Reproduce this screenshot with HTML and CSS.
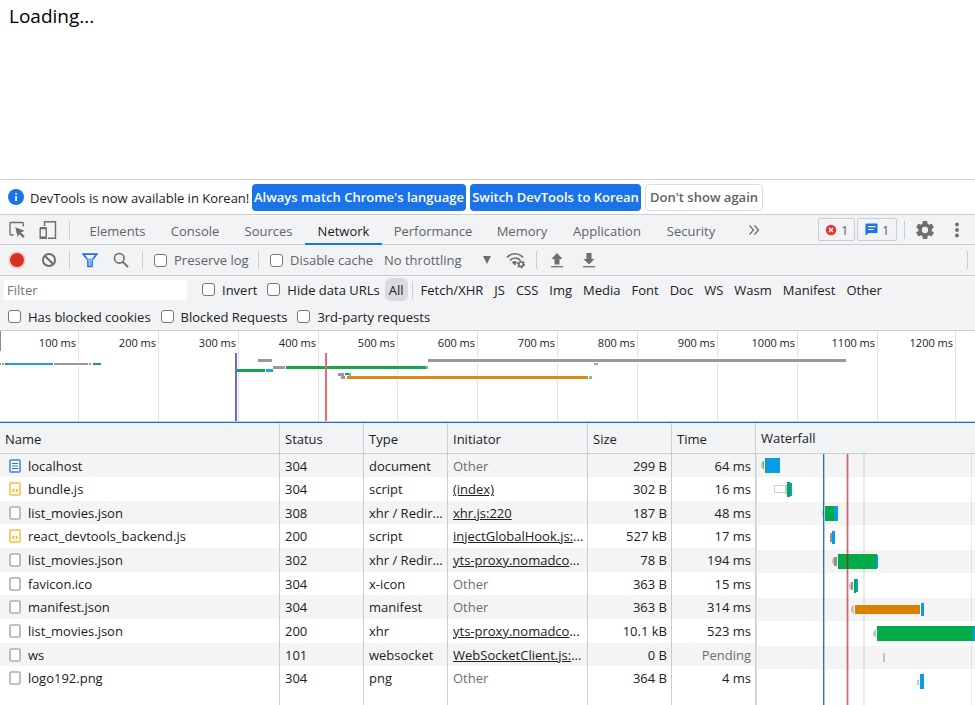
FILE: index.html
```
<!DOCTYPE html>
<html lang="en">
<head>
<meta charset="utf-8">
<title>Loading</title>
<link rel="stylesheet" href="styles.css">
</head>
<body>
<main class="page">Loading...</main>
<section class="devtools">
  <div class="infobar">
    <svg class="info-icon" width="16" height="16" viewBox="0 0 16 16"><circle cx="8" cy="8" r="8" fill="#1a73e8"/><path d="M7.2 4h1.7v1.6H7.2zM7.2 6.9h1.7v5.2H7.2z" fill="#fff"/></svg>
    <span class="info-text">DevTools is now available in Korean!</span>
    <button class="btn primary match">Always match Chrome's language</button>
    <button class="btn primary switch">Switch DevTools to Korean</button>
    <button class="btn dismiss">Don't show again</button>
  </div>

  <nav class="tabs">
    <button class="icon inspect" aria-label="Inspect"><svg width="18" height="18" viewBox="0 0 18 18"><path d="M15.300 5.500V2.500a1 1 0 0 0-1-1H3a1 1 0 0 0-1 1V13a1 1 0 0 0 1 1h2.500" fill="none" stroke="#6e6e6e" stroke-width="1.300"/><path d="M7.200 6.200l9.300 3.500-3.600 1.700 3.800 3.900-1.600 1.600-3.800-3.900-1.600 3z" fill="#6e6e6e"/></svg></button>
    <button class="icon device" aria-label="Device toolbar"><svg width="18" height="20" viewBox="0 0 18 20"><path d="M5.500 6V1.700h11v16.600H9M1.200 8.500h6v9.800h-6z" fill="none" stroke="#6e6e6e" stroke-width="1.400"/><path d="M1 8h6.500M1 17.500h6.500" stroke="#6e6e6e" stroke-width="2"/></svg></button>
    <span class="sep"></span>
    <div class="tablist" role="tablist">
      <button class="tab" role="tab">Elements</button>
      <button class="tab" role="tab">Console</button>
      <button class="tab" role="tab">Sources</button>
      <button class="tab active" role="tab" aria-selected="true">Network</button>
      <button class="tab" role="tab">Performance</button>
      <button class="tab" role="tab">Memory</button>
      <button class="tab" role="tab">Application</button>
      <button class="tab" role="tab">Security</button>
    </div>
    <button class="icon more" aria-label="More tabs"><svg width="12" height="12" viewBox="0 0 12 12"><path d="M1.500 1.500L5.500 6l-4 4.500M6.500 1.500l4 4.500-4 4.500" fill="none" stroke="#6e6e6e" stroke-width="1.300"/></svg></button>
    <button class="counter errors"><svg width="12" height="12" viewBox="0 0 12 12"><circle cx="6" cy="6" r="5.300" fill="#e8343f"/><path d="M4 4l4 4M8 4l-4 4" stroke="#fff" stroke-width="1.300"/></svg>1</button>
    <button class="counter issues"><svg width="13" height="13" viewBox="0 0 13 13"><path d="M1.500.500h10a1 1 0 0 1 1 1v7.500a1 1 0 0 1-1 1H3.500L.500 12.800V1.500a1 1 0 0 1 1-1z" fill="#1a73e8"/><path d="M3 3.700h7.500M3 6.500h5.500" stroke="#fff" stroke-width="1.200"/></svg>1</button>
    <span class="sep"></span>
    <button class="icon gear" aria-label="Settings"><svg width="18" height="18" viewBox="2 2 20 20"><path fill="#6e6e6e" d="M19.430 12.980c.04-.32.07-.64.07-.98s-.03-.66-.07-.98l2.110-1.650c.19-.15.24-.42.12-.64l-2-3.460c-.12-.22-.39-.3-.61-.22l-2.490 1c-.52-.4-1.080-.73-1.690-.98l-.38-2.650C14.460 2.180 14.250 2 14 2h-4c-.25 0-.46.18-.49.42l-.38 2.650c-.61.25-1.170.59-1.690.98l-2.490-1c-.23-.09-.49 0-.61.22l-2 3.460c-.13.22-.07.49.12.64l2.110 1.650c-.04.32-.07.65-.07.98s.03.66.07.98l-2.110 1.650c-.19.15-.24.42-.12.64l2 3.460c.12.22.39.3.61.22l2.490-1c.52.4 1.080.73 1.690.98l.38 2.650c.03.24.24.42.49.42h4c.25 0 .46-.18.49-.42l.38-2.650c.61-.25 1.170-.59 1.690-.98l2.490 1c.23.09.49 0 .61-.22l2-3.460c.12-.22.07-.49-.12-.64zM12 15.500a3.500 3.500 0 1 1 0-7 3.500 3.500 0 0 1 0 7z"/></svg></button>
    <button class="icon kebab" aria-label="Menu"><svg width="4" height="16" viewBox="0 0 4 16"><g fill="#6e6e6e"><circle cx="2" cy="2.500" r="1.900"/><circle cx="2" cy="8" r="1.900"/><circle cx="2" cy="13.500" r="1.900"/></g></svg></button>
  </nav>

  <div class="toolbar">
    <button class="icon record" aria-label="Record"><svg width="18" height="18" viewBox="0 0 18 18"><circle cx="9" cy="9" r="8.700" fill="#f6c9c6"/><circle cx="9" cy="9" r="7" fill="#d93025"/></svg></button>
    <button class="icon clear" aria-label="Clear"><svg width="16" height="16" viewBox="0 0 16 16"><circle cx="8" cy="8" r="6.100" fill="none" stroke="#6e6e6e" stroke-width="2"/><path d="M3.700 3.700l8.600 8.600" stroke="#6e6e6e" stroke-width="2"/></svg></button>
    <span class="sep"></span>
    <button class="icon funnel" aria-label="Filter"><svg width="16" height="15" viewBox="0 0 16 15"><path d="M1.300 1.200h13.400L10 7v6.500H6V7z" fill="#fff" stroke="#1a73e8" stroke-width="1.700"/><path d="M4.500 5.300h7L9.500 8v5h-3V8z" fill="#8ab4f0"/></svg></button>
    <button class="icon search" aria-label="Search"><svg width="16" height="16" viewBox="0 0 16 16"><circle cx="6.300" cy="6.300" r="4.800" fill="none" stroke="#6e6e6e" stroke-width="1.600"/><path d="M9.800 9.800l5.200 5.200" stroke="#6e6e6e" stroke-width="1.900"/></svg></button>
    <span class="sep"></span>
    <label class="check preserve"><input type="checkbox">Preserve log</label>
    <span class="sep"></span>
    <label class="check cache"><input type="checkbox">Disable cache</label>
    <div class="throttle"><select aria-label="Throttling"><option>No throttling</option></select><svg width="8" height="8" viewBox="0 0 8 8"><path d="M0 0h8L4 8z" fill="#6e6e6e"/></svg></div>
    <button class="icon wifi" aria-label="Network conditions"><svg width="20" height="17" viewBox="0 0 20 17"><g fill="none" stroke="#6e6e6e" stroke-width="1.700"><path d="M1 5.500C5.500.500 12.500.500 17 5.500"/><path d="M4 8.300c3-3 7-3 10-.3"/></g><path d="M5.800 10.200c1.800-1.500 3.600-1.500 4.900-.5L10 12.500 9 13.500z" fill="#6e6e6e"/><circle cx="15" cy="12.300" r="2.300" fill="none" stroke="#6e6e6e" stroke-width="1.700"/><circle cx="15" cy="12.300" r="3.500" fill="none" stroke="#6e6e6e" stroke-width="1.200" stroke-dasharray="1.830 1.830"/></svg></button>
    <span class="sep"></span>
    <button class="icon upload" aria-label="Import"><svg width="14" height="15" viewBox="0 0 14 15"><path d="M7 0l5.500 6H9.500v5.500h-5V6h-3z" fill="#6e6e6e"/><path d="M1 13.700h12" stroke="#6e6e6e" stroke-width="1.300"/></svg></button>
    <button class="icon download" aria-label="Export"><svg width="14" height="15" viewBox="0 0 14 15"><path d="M7 11.500L1.500 6h3V0h5v6h3z" fill="#6e6e6e"/><path d="M1 13.700h12" stroke="#6e6e6e" stroke-width="1.300"/></svg></button>
    <span class="sep end"></span>
  </div>

  <div class="filters">
    <div class="filter-row">
      <input class="filter-box" type="text" placeholder="Filter" aria-label="Filter">
      <label class="check invert"><input type="checkbox">Invert</label>
      <label class="check hide"><input type="checkbox">Hide data URLs</label>
      <div class="types">
        <button class="type on">All</button>
        <span class="sep"></span>
        <button class="type">Fetch/XHR</button>
        <button class="type">JS</button>
        <button class="type">CSS</button>
        <button class="type">Img</button>
        <button class="type">Media</button>
        <button class="type">Font</button>
        <button class="type">Doc</button>
        <button class="type">WS</button>
        <button class="type">Wasm</button>
        <button class="type">Manifest</button>
        <button class="type">Other</button>
      </div>
    </div>
    <div class="filter-row second">
      <label class="check"><input type="checkbox">Has blocked cookies</label>
      <label class="check"><input type="checkbox">Blocked Requests</label>
      <label class="check"><input type="checkbox">3rd-party requests</label>
    </div>
  </div>

  <div class="overview">
    <span>100 ms</span><span>200 ms</span><span>300 ms</span><span>400 ms</span><span>500 ms</span><span>600 ms</span><span>700 ms</span><span>800 ms</span><span>900 ms</span><span>1000 ms</span><span>1100 ms</span><span>1200 ms</span>
    <svg class="bars" viewBox="0 0 975 90" preserveAspectRatio="none">
      <path d="M0 0h1v20H0z" fill="#8c8c8c"/>
      <g fill="#fff"><path d="M0 31h102v5H0zM258 27h14v5h-14zM427 27h420v5H427zM273 34h156v5H273zM235 37h38v5h-38zM337 41h14v5h-14zM340 44h253v5H340z"/></g>
      <g fill="#999"><path d="M0 32h1v2H0zM2 32h2v2H2zM54 32h34v2H54zM89 32h2v2h-2zM258 28h14v3h-14zM428 28h418v3H428zM273 35h12v3h-12zM338 42h6v3h-6zM341 45h4v3h-4z"/></g>
      <g fill="#14a64c"><path d="M5 32h3v2H5zM93 32h8v2h-8zM286 35h140v3H286zM236 38h29v3h-29zM345 42h4v2h-4z"/></g>
      <g fill="#1f9fe6"><path d="M8 32h45v2H8zM266 38h7v3h-7z"/></g>
      <g fill="#6bc5b9"><path d="M426 35h2v3h-2zM349 42h2v3h-2zM589 45h3v3h-3zM594 32h4v2h-4z"/></g>
      <path d="M347 45h241v3H347z" fill="#dd8a12"/>
      <path d="M235 22h2v68h-2z" fill="#6a6ac8"/>
      <path d="M325 22h2v68h-2z" fill="#dd7070"/>
    </svg>
  </div>

  <div class="requests">
    <table>
      <colgroup><col class="c-name"><col class="c-small"><col class="c-small"><col class="c-init"><col class="c-small"><col class="c-small"></colgroup>
      <thead><tr><th>Name</th><th>Status</th><th>Type</th><th>Initiator</th><th>Size</th><th>Time</th></tr></thead>
      <tbody>
        <tr><td><svg class="file" viewBox="0 0 12 14"><rect x="1" y="1" width="10" height="12" rx="1" fill="#fff" stroke="#669df6" stroke-width="2"/><path d="M3 4.500h6M3 7h6M3 9.500h6" stroke="#1a73e8"/></svg>localhost</td><td>304</td><td>document</td><td class="dim">Other</td><td>299 B</td><td>64 ms</td></tr>
        <tr><td><svg class="file" viewBox="0 0 12 14"><rect x="1" y="1" width="10" height="12" rx="1" fill="#fff" stroke="#f8cf66" stroke-width="2"/><path d="M5.200 6.800L3.700 8.500l1.500 1.700M6.800 6.800l1.500 1.700-1.500 1.700" fill="none" stroke="#eeb010" stroke-width="1.200"/></svg>bundle.js</td><td>304</td><td>script</td><td><a href="#">(index)</a></td><td>302 B</td><td>16 ms</td></tr>
        <tr><td><svg class="file" viewBox="0 0 12 14"><rect x="1" y="1" width="10" height="12" rx="1" fill="#fff" stroke="#abb0b5" stroke-width="1.600"/></svg>list_movies.json</td><td>308</td><td>xhr / Redir...</td><td><a href="#">xhr.js:220</a></td><td>187 B</td><td>48 ms</td></tr>
        <tr><td><svg class="file" viewBox="0 0 12 14"><rect x="1" y="1" width="10" height="12" rx="1" fill="#fff" stroke="#f8cf66" stroke-width="2"/><path d="M5.200 6.800L3.700 8.500l1.500 1.700M6.800 6.800l1.500 1.700-1.500 1.700" fill="none" stroke="#eeb010" stroke-width="1.200"/></svg>react_devtools_backend.js</td><td>200</td><td>script</td><td><a href="#">injectGlobalHook.js:</a>...</td><td>527 kB</td><td>17 ms</td></tr>
        <tr><td><svg class="file" viewBox="0 0 12 14"><rect x="1" y="1" width="10" height="12" rx="1" fill="#fff" stroke="#abb0b5" stroke-width="1.600"/></svg>list_movies.json</td><td>302</td><td>xhr / Redir...</td><td><a href="#">yts-proxy.nomadco</a>...</td><td>78 B</td><td>194 ms</td></tr>
        <tr><td><svg class="file" viewBox="0 0 12 14"><rect x="1" y="1" width="10" height="12" rx="1" fill="#fff" stroke="#abb0b5" stroke-width="1.600"/></svg>favicon.ico</td><td>304</td><td>x-icon</td><td class="dim">Other</td><td>363 B</td><td>15 ms</td></tr>
        <tr><td><svg class="file" viewBox="0 0 12 14"><rect x="1" y="1" width="10" height="12" rx="1" fill="#fff" stroke="#abb0b5" stroke-width="1.600"/></svg>manifest.json</td><td>304</td><td>manifest</td><td class="dim">Other</td><td>363 B</td><td>314 ms</td></tr>
        <tr><td><svg class="file" viewBox="0 0 12 14"><rect x="1" y="1" width="10" height="12" rx="1" fill="#fff" stroke="#abb0b5" stroke-width="1.600"/></svg>list_movies.json</td><td>200</td><td>xhr</td><td><a href="#">yts-proxy.nomadco</a>...</td><td>10.1 kB</td><td>523 ms</td></tr>
        <tr><td><svg class="file" viewBox="0 0 12 14"><rect x="1" y="1" width="10" height="12" rx="1" fill="#fff" stroke="#abb0b5" stroke-width="1.600"/></svg>ws</td><td>101</td><td>websocket</td><td><a href="#">WebSocketClient.js:</a>...</td><td>0 B</td><td class="dim">Pending</td></tr>
        <tr><td><svg class="file" viewBox="0 0 12 14"><rect x="1" y="1" width="10" height="12" rx="1" fill="#fff" stroke="#abb0b5" stroke-width="1.600"/></svg>logo192.png</td><td>304</td><td>png</td><td class="dim">Other</td><td>364 B</td><td>4 ms</td></tr>
        <tr class="filler"><td></td><td></td><td></td><td></td><td></td><td></td></tr>
      </tbody>
    </table>
    <div class="waterfall">
      <div class="waterfall-head">Waterfall</div>
      <svg viewBox="0 0 219 251" preserveAspectRatio="none">
        <path d="M0 0h219v23H0zM0 48h219v23H0zM0 96h219v23H0zM0 144h219v23H0zM0 192h219v23H0z" fill="#f4f4f4"/>
        <path d="M107 0h2v251h-2zM215 0h1v251h-1z" fill="#000" fill-opacity=".08"/>
        <path d="M0 0h1v251H0z" fill="#e0e0e0"/>
        <g fill="#c4c4c4"><path d="M5 9l2-2v8l-2-2zM29 31h2v9h-2zM66 56h2v6h-2zM76 105l2-2v8l-2-2zM93 130l2-2v8l-2-2zM95 153l3-2v9l-3-2zM117 178l3-3v9l-3-3zM127 199h2v9h-2zM161 226h2v5h-2z"/></g>
        <g fill="#929292"><path d="M7 7h1v8H7zM74 79h3v9h-3zM78 103h3v9h-3zM95 128h2v8h-2z"/></g>
        <path d="M18.500 31.500h11v7h-11z" fill="#fff" stroke="#ccc"/>
        <g fill="#00ab48"><path d="M9 4h1v15H9zM31 28h3v15h-3zM68 52h11v15H68zM82 100h39v15H82zM98 125h2v14h-2zM121 172h96v15h-96z"/></g>
        <g fill="#079ce4"><path d="M10 4h14v15H10zM34 29h2v13h-2zM78 52h4v15h-4zM76 77h3v13h-3zM120 101h2v13h-2zM100 125h2v13h-2zM165 149h3v13h-3zM217 172h2v15h-2zM164 220h4v15h-4z"/></g>
        <path d="M99 151h65v9H99z" fill="#d98200"/>
        <path d="M67 0h1v251h-1z" fill="#2a6fc9"/><path d="M68 0h1v251h-1z" fill="#a9c6ee"/>
        <path d="M90 0h1v251h-1zM92 0h1v251h-1z" fill="#c01818" fill-opacity=".25"/><path d="M91 0h1v251h-1z" fill="#a00c0c" fill-opacity=".6"/>
      </svg>
    </div>
  </div>
</section>
</body>
</html>
```
FILE: styles.css
```
* { box-sizing: border-box; }
body {
  margin: 0;
  background: #fff;
  color: #202124;
  font: 13px/18px "Open Sans", "Noto Sans", sans-serif;
}
button, input, select { font: inherit; color: inherit; margin: 0; }
button { border: 0; background: none; padding: 0; white-space: nowrap; }
svg { display: block; flex: none; }

.page {
  height: 179px;
  padding: 3px 9px;
  color: #000;
  font-size: 19px;
  line-height: 26px;
}
.devtools { border-top: 1px solid #cacdd1; }

.infobar {
  display: flex;
  align-items: center;
  height: 35px;
  padding-left: 8px;
  border-bottom: 1px solid #cacdd1;
}
.info-text { width: 222px; margin: 2px 0 0 6px; white-space: nowrap; }
.btn { height: 27px; border-radius: 4px; font-weight: 600; }
.primary { background: #1a73e8; color: #fff; margin-right: 4px; }
.match { width: 214px; }
.switch { width: 171px; }
.dismiss { width: 118px; border: 1px solid #dadce0; color: #5f6368; }

.tabs, .toolbar {
  display: flex;
  align-items: center;
  background: #f1f3f4;
  border-bottom: 1px solid #cacdd1;
  color: #5f6368;
}
.tabs { height: 30px; padding: 0 16px 0 8px; }
.toolbar { height: 31px; padding: 0 7px 0 8px; }
.sep { flex: none; width: 1px; height: 18px; background: #cacdd1; }
.device { margin: 0 12px 0 13px; }
.tablist {
  display: grid;
  grid-template-columns: 81px 74px 73px 77px 102px 76px 94px 74px;
  align-self: stretch;
  margin-left: 7px;
}
.tab { height: 30px; padding: 4px 0 0; border-bottom: 2px solid transparent; }
.tab.active { color: #202124; border-bottom-color: #1a73e8; }
.more { margin: 0 auto 0 20px; }
.counter {
  display: flex;
  align-items: center;
  gap: 4px;
  width: 37px;
  height: 23px;
  padding: 0 6px;
  margin-right: 2px;
  border: 1px solid #cacdd1;
  border-radius: 2px;
}
.issues { width: 40px; margin-right: 7px; padding: 0 7px; }
.gear { margin: 0 21px 0 11px; }

.clear { margin: 0 12px 0 15px; }
.funnel { margin: 0 15px 0 12px; }
.search { margin-right: 13px; }
.check { display: flex; align-items: center; white-space: nowrap; }
.check input {
  appearance: none;
  flex: none;
  width: 13px;
  height: 13px;
  margin-right: 7px;
  border: 1px solid #767676;
  border-radius: 3px;
  background: #fff;
}
.preserve { width: 104px; margin-left: 11px; }
.cache { width: 114px; margin-left: 11px; }
.throttle { display: flex; align-items: center; width: 107px; }
.throttle select { flex: 1; appearance: none; border: 0; padding: 0; background: none; }
.wifi { margin: 0 10px 0 15px; }
.upload { margin: 0 18px 0 13px; }
.end { margin-left: auto; }

.filters { background: #f1f3f4; border-bottom: 1px solid #cacdd1; padding: 0 4px; height: 55px; }
.filter-row { display: flex; align-items: center; height: 27px; }
.filter-box { width: 183px; height: 20px; padding: 0 3px; border: 0; background: #fff; }
.filter-box::placeholder { color: #757575; opacity: 1; }
.invert { margin: 0 10px 0 15px; }
.types { display: flex; align-items: center; gap: 3px; margin-left: 5px; }
.types .sep { margin: 0 1px; }
.type { height: 23px; padding: 0 4px; border-radius: 6px; }
.type.on { background: #d9dbde; }
.second { gap: 10px; padding-left: 4px; }

.overview {
  position: relative;
  display: grid;
  grid-template-columns: 79fr 80fr 80fr 80fr 79fr 80fr 80fr 80fr 80fr 80fr 80fr 78fr 19fr;
  height: 91px;
  border-bottom: 1px solid #cacdd1;
  font-size: 11px;
  line-height: 24px;
  text-align: right;
}
.overview span { padding-right: 2px; border-right: 1px solid #e2e2e2; white-space: nowrap; }
.bars { position: absolute; top: 0; left: 0; width: 100%; height: 90px; }

.requests { display: grid; grid-template-columns: 756fr 219fr; border-top: 1px solid #1a6fdc; }
table { width: 100%; table-layout: fixed; border-collapse: separate; border-spacing: 0; }
.c-name { width: 280px; }
.c-small { width: 84px; }
.c-init { width: 140px; }
th, td {
  padding: 0 0 0 5px;
  border-right: 1px solid #cacdd1;
  overflow: hidden;
  text-overflow: ellipsis;
  white-space: nowrap;
  text-align: left;
}
th { height: 31px; padding-top: 2px; background: #f1f3f4; border-bottom: 1px solid #cacdd1; font-weight: 400; }
td { height: 24px; }
tr:first-child td, tr:nth-child(3n) td { height: 23px; }
tbody tr:nth-child(odd):not(.filler) { background: #f4f4f4; }
td:first-child { padding-left: 9px; }
td:nth-child(n+5) { text-align: right; padding-right: 4px; }
td a { color: inherit; }
.file { display: inline-block; width: 12px; height: 14px; margin-right: 7px; vertical-align: -2px; }
.dim { color: #6a6e72; }
tbody .filler td { height: 15px; }
.waterfall-head { height: 31px; padding: 0 5px; line-height: 31px; background: #f1f3f4; border-bottom: 1px solid #cacdd1; }
.waterfall svg { width: 100%; height: 251px; }
```
